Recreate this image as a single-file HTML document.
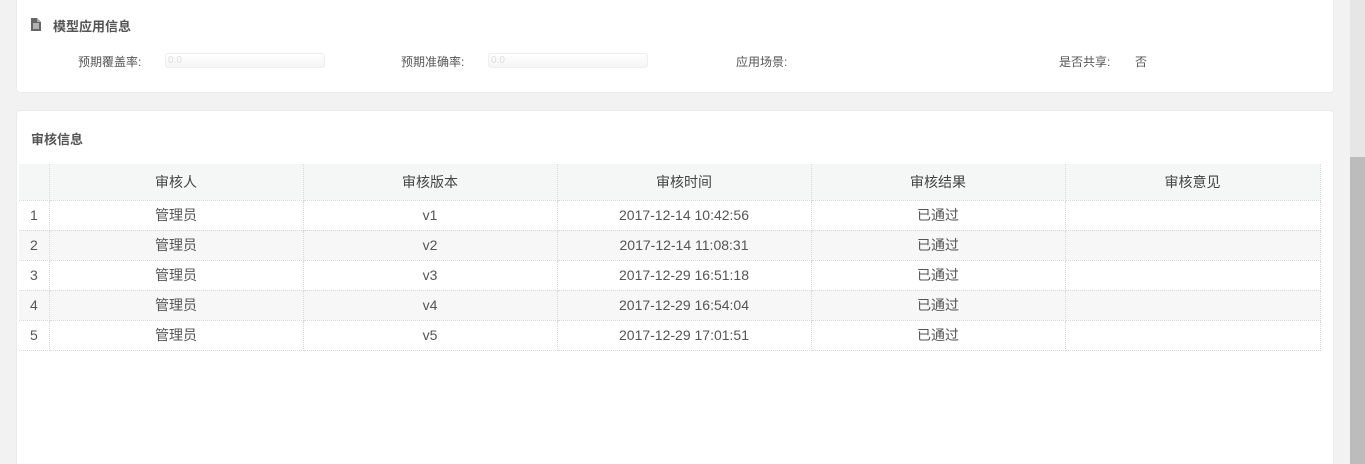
<!DOCTYPE html>
<html><head><meta charset="utf-8"><style>
*{margin:0;padding:0;box-sizing:border-box}
html,body{width:1365px;height:464px;overflow:hidden}
body{background:#f2f2f2;font-family:"Liberation Sans","Noto Sans CJK SC",sans-serif;position:relative;color:#555}
.card{position:absolute;left:16px;width:1318px;background:#fff;border-radius:4px;border:1px solid #ebebeb}
.sb{position:absolute;left:1350px;top:0;width:15px;height:464px;background:#e6e6e6}
.th{position:absolute;left:1350px;top:157px;width:15px;height:307px;background:#bcbcbc}
.t{position:absolute;font-size:12px;color:#555;white-space:nowrap}
.inp{position:absolute;width:160px;height:15px;border:1px solid #eee;border-radius:3px;background:linear-gradient(#fff,#f5f5f5);font-size:10px;color:#ddd;padding-left:2px;line-height:13px}
table{position:absolute;left:19px;top:164px;border-collapse:collapse;font-size:14px;color:#555}
td,th{border:1px dotted #d8d8d8;height:30px;text-align:center;font-weight:normal}
th{height:36px;background:#f5f7f6;color:#444;border-top:none}
tr:nth-child(odd) td{background:#f7f7f7}
td:first-child,th:first-child{text-align:left;padding-left:11px;border-left:none}
</style></head><body>
<div class="card" style="top:-5px;height:98px"></div>
<div class="card" style="top:110px;height:370px"></div>
<div class="sb"></div><div class="th"></div>
<svg style="position:absolute;left:31px;top:18px" width="10" height="13" viewBox="0 0 10 13"><path d="M0 0H6L10 4V13H0Z" fill="#666"/><path d="M6 0V4H10" fill="#aaa"/><path d="M2 6H8M2 8H8M2 10H8" stroke="#fff" stroke-width="1"/></svg>
<div class="t" style="left:53px;top:16px;font-size:13px;font-weight:bold;color:#555">模型应用信息</div>
<div class="t" style="left:78px;top:53px">预期覆盖率:</div>
<div class="inp" style="left:165px;top:53px">0.0</div>
<div class="t" style="left:401px;top:53px">预期准确率:</div>
<div class="inp" style="left:488px;top:53px">0.0</div>
<div class="t" style="left:736px;top:53px">应用场景:</div>
<div class="t" style="left:1059px;top:53px">是否共享:</div>
<div class="t" style="left:1135px;top:53px">否</div>
<div class="t" style="left:31px;top:129px;font-size:13px;font-weight:bold">审核信息</div>
<table>
<colgroup><col style="width:30px"><col style="width:254px"><col style="width:254px"><col style="width:254px"><col style="width:254px"><col style="width:255px"></colgroup>
<tr><th></th><th>审核人</th><th>审核版本</th><th>审核时间</th><th>审核结果</th><th>审核意见</th></tr>
<tr><td>1</td><td>管理员</td><td>v1</td><td>2017-12-14 10:42:56</td><td>已通过</td><td></td></tr>
<tr><td>2</td><td>管理员</td><td>v2</td><td>2017-12-14 11:08:31</td><td>已通过</td><td></td></tr>
<tr><td>3</td><td>管理员</td><td>v3</td><td>2017-12-29 16:51:18</td><td>已通过</td><td></td></tr>
<tr><td>4</td><td>管理员</td><td>v4</td><td>2017-12-29 16:54:04</td><td>已通过</td><td></td></tr>
<tr><td>5</td><td>管理员</td><td>v5</td><td>2017-12-29 17:01:51</td><td>已通过</td><td></td></tr>
</table>
</body></html>
